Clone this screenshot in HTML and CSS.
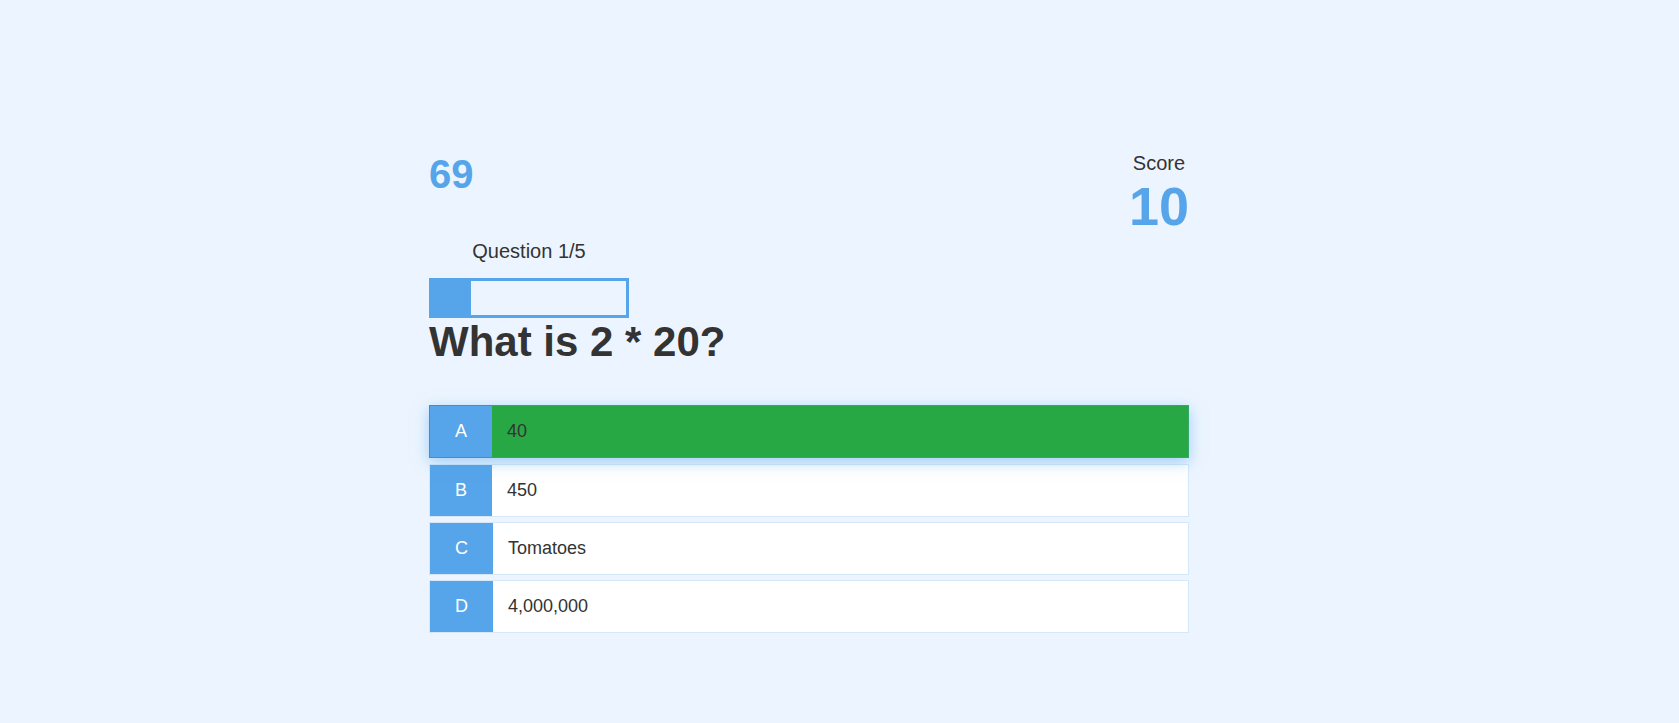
FILE: index.html
```html
<!DOCTYPE html>
<html lang="en">
<head>
<meta charset="UTF-8">
<title>Quiz</title>
<link rel="stylesheet" href="styles.css">
</head>
<body>
<div class="container">
  <div class="game">
    <div class="hud">
      <div class="hud-left">
        <h1 class="timer">69</h1>
        <div class="hud-item">
          <p class="hud-prefix">Question 1/5</p>
          <div class="progress-bar"><div class="progress-bar-full" style="width: 20%"></div></div>
        </div>
      </div>
      <div class="hud-item">
        <p class="hud-prefix">Score</p>
        <h1 class="hud-main-text">10</h1>
      </div>
    </div>
    <h2 class="question">What is 2 * 20?</h2>
    <div class="choice-container correct hover">
      <p class="choice-prefix">A</p>
      <p class="choice-text">40</p>
    </div>
    <div class="choice-container">
      <p class="choice-prefix">B</p>
      <p class="choice-text">450</p>
    </div>
    <div class="choice-container">
      <p class="choice-prefix">C</p>
      <p class="choice-text">Tomatoes</p>
    </div>
    <div class="choice-container">
      <p class="choice-prefix">D</p>
      <p class="choice-text">4,000,000</p>
    </div>
  </div>
</div>
</body>
</html>
```

FILE: styles.css
```css
* {
  box-sizing: border-box;
  margin: 0;
  padding: 0;
  font-family: "Liberation Sans", Arial, Helvetica, sans-serif;
}

html {
  font-size: 62.5%;
}

body {
  background-color: #ecf5ff;
  color: #333;
  font-size: 1.6rem;
}

.container {
  width: 800px;
  height: 723px;
  margin-left: 409px;
  padding: 152px 20px 20px;
}

.game {
  display: flex;
  flex-direction: column;
}

.hud {
  display: flex;
  justify-content: space-between;
}

.hud-left {
  display: flex;
  flex-direction: column;
  align-items: flex-start;
}

.timer {
  font-size: 4rem;
  color: #56a5eb;
  font-weight: 700;
  margin-bottom: 43px;
}

.hud-item {
  display: flex;
  flex-direction: column;
}

.hud-prefix {
  text-align: center;
  font-size: 2rem;
}

.hud-main-text {
  text-align: center;
  font-size: 5.4rem;
  color: #56a5eb;
  font-weight: 700;
  margin-bottom: 5rem;
}

.progress-bar {
  width: 20rem;
  height: 4rem;
  border: 0.3rem solid #56a5eb;
  margin-top: 1.5rem;
}

.progress-bar-full {
  height: 3.4rem;
  background-color: #56a5eb;
}

.question {
  font-size: 4.2rem;
  font-weight: 700;
  margin-bottom: 4rem;
}

.choice-container {
  display: flex;
  margin-bottom: 0.5rem;
  width: 100%;
  font-size: 1.8rem;
  border: 0.1rem solid rgba(86, 165, 235, 0.25);
  background-color: white;
}

.choice-container.hover {
  box-shadow: 0 0.4rem 1.4rem 0 rgba(86, 165, 235, 0.5);
  transform: translateY(-0.1rem);
}

.choice-container.correct {
  background-color: #28a745;
}

.choice-prefix {
  padding: 1.5rem 2.5rem;
  background-color: #56a5eb;
  color: white;
}

.choice-text {
  padding: 1.5rem;
  width: 100%;
}
```
